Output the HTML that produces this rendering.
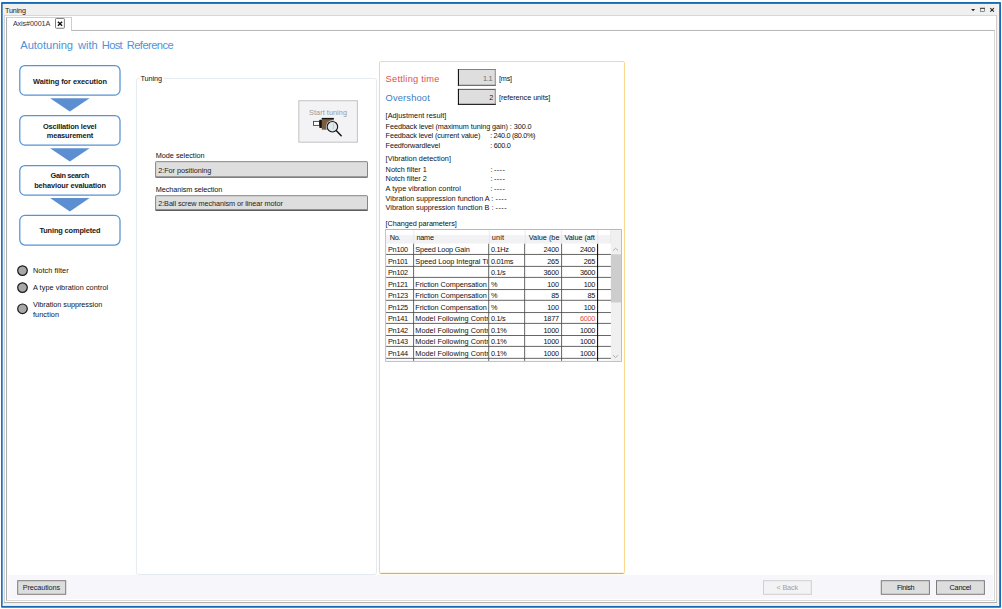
<!DOCTYPE html>
<html lang="en">
<head>
<meta charset="utf-8">
<title>Tuning</title>
<style>
html,body{margin:0;padding:0;}
body{width:1002px;height:609px;position:relative;overflow:hidden;background:#fff;font-family:"Liberation Sans",sans-serif;color:#222;}
#g{position:absolute;left:0;top:0;}
.t{position:absolute;white-space:pre;line-height:12px;height:12px;color:#111;}
</style>
</head>
<body>
<svg id="g" width="1002" height="609" viewBox="0 0 1002 609">
<defs>
<linearGradient id="hd" x1="0" y1="0" x2="0" y2="1"><stop offset="0" stop-color="#ffffff"/><stop offset="0.36" stop-color="#ffffff"/><stop offset="0.40" stop-color="#f3f3f5"/><stop offset="1" stop-color="#f1f1f3"/></linearGradient>
</defs>
<!-- window chrome -->
<rect x="1.05" y="2.1" width="999.95" height="605.7" rx="0.8" fill="#186ab7"/>
<rect x="2.65" y="3.9" width="996.45" height="601.85" fill="#f0f0f0"/>
<rect x="2.65" y="604.5" width="996.45" height="1.25" fill="#f8f4ee"/>
<rect x="997.8" y="3.9" width="1.3" height="601.85" fill="#f8f4ee"/>
<!-- outer frame -->
<rect x="4.1" y="15" width="992.8" height="587.9" fill="#fff"/>
<rect x="4.1" y="15" width="992.8" height="0.85" fill="#d0d0d0"/>
<rect x="4.1" y="15" width="0.9" height="587.9" fill="#d0d0d0"/>
<rect x="996.05" y="15" width="0.85" height="587.9" fill="#c8c8c8"/>
<rect x="4.1" y="602" width="992.8" height="0.9" fill="#a8a8a8"/>
<!-- inner frame (tab content) -->
<rect x="71.1" y="29.95" width="923.8" height="0.85" fill="#aaaaaa"/>
<rect x="6.05" y="17.1" width="1" height="583.65" fill="#ababab"/>
<rect x="994.05" y="29.95" width="0.85" height="570.8" fill="#cfcfcf"/>
<rect x="6.05" y="600" width="988.85" height="0.75" fill="#cdcdcd"/>
<!-- tab -->
<rect x="6.05" y="17.1" width="65.95" height="0.8" fill="#c4c4c4"/>
<rect x="71.1" y="17.1" width="0.9" height="13.7" fill="#c8c8c8"/>
<!-- tab close box -->
<rect x="55.5" y="18.45" width="8.9" height="9.8" rx="0.8" fill="#fff" stroke="#6e6e6e" stroke-width="0.9"/>
<path d="M57.9 21.8 L62.1 25.7 M62.1 21.8 L57.9 25.7" stroke="#111" stroke-width="1.45" fill="none"/>
<!-- title bar icons -->
<g transform="translate(968,4.6)">
<path d="M3.1 4.4 L7.1 4.4 L5.1 6.6 Z" fill="#222"/>
<rect x="12.55" y="3.7" width="4.1" height="3.3" fill="none" stroke="#555a55" stroke-width="0.65"/>
<rect x="12.2" y="3.2" width="4.8" height="0.9" fill="#333"/>
<path d="M22.3 3.5 L25.9 7 M25.9 3.5 L22.3 7" stroke="#222" stroke-width="1.05" fill="none"/>
</g>
<!-- bottom bar -->
<rect x="8.2" y="575" width="985.1" height="23.8" fill="#f7f7fb"/>
<rect x="17.7" y="580.7" width="48" height="13.6" fill="#dddddd" stroke="#7c7c7c" stroke-width="1"/>
<rect x="763.5" y="580.7" width="47.8" height="13.6" fill="#f3f3f5" stroke="#cfcfcf" stroke-width="1"/>
<rect x="881.3" y="580.7" width="48.1" height="13.6" fill="#dddddd" stroke="#7c7c7c" stroke-width="1"/>
<rect x="936.5" y="580.7" width="47.9" height="13.6" fill="#dddddd" stroke="#7c7c7c" stroke-width="1"/>

<!-- steps -->
<g fill="#fff" stroke="#5793d5" stroke-width="1.25">
<rect x="19.8" y="65.5" width="100.2" height="29.6" rx="5.2"/>
<rect x="19.8" y="115.5" width="100.2" height="29.6" rx="5.2"/>
<rect x="19.8" y="165.5" width="100.2" height="29.6" rx="5.2"/>
<rect x="19.8" y="215.4" width="100.2" height="29.6" rx="5.2"/>
</g>
<g fill="#5b8fd2">
<path d="M50.1 98.2 H89.6 L69.85 111.6 Z"/>
<path d="M50.1 148.2 H89.6 L69.85 161.6 Z"/>
<path d="M50.1 198.1 H89.6 L69.85 211.5 Z"/>
</g>
<!-- radios -->
<g fill="#a8a8a8" stroke="#181818" stroke-width="1.2">
<circle cx="22.5" cy="270.6" r="4.8"/>
<circle cx="22.5" cy="287.6" r="4.8"/>
<circle cx="22.5" cy="308.8" r="4.8"/>
</g>

<!-- Tuning group box -->
<path d="M139.5 78.4 H138.5 Q136.4 78.4 136.4 80.6 V572.3 Q136.4 574.5 138.6 574.5 H374.3 Q376.5 574.5 376.5 572.3 V80.6 Q376.5 78.4 374.3 78.4 H164" fill="none" stroke="#e5eaf0" stroke-width="1"/>
<!-- start tuning button -->
<rect x="298.8" y="100.7" width="58.6" height="41.5" fill="#f3f3f5" stroke="#c2c2c2" stroke-width="1"/>
<g>
<rect x="313.5" y="121.4" width="6" height="4" fill="#fff" stroke="#454545" stroke-width="0.9"/>
<rect x="319.3" y="119.8" width="2.7" height="8.1" rx="0.6" fill="#121212"/>
<rect x="321.8" y="118" width="11.95" height="11.7" fill="#7b5c40"/>
<rect x="321.8" y="117.9" width="11.95" height="1.3" fill="#151515"/>
<circle cx="332.4" cy="126.7" r="6.4" fill="#f3f3f5"/>
<circle cx="332.4" cy="126.7" r="5.25" fill="#dfe8ec" stroke="#151515" stroke-width="1.15"/>
<rect x="332.9" y="123.4" width="0.9" height="6" fill="#c4cbd0"/>
<path d="M336.4 130.7 L341.2 135.7" stroke="#151515" stroke-width="1.5" stroke-linecap="round"/>
</g>
<!-- combos -->
<rect x="155.6" y="161.65" width="211.9" height="15.45" rx="0.6" fill="#dedede" stroke="#7e7e7e" stroke-width="0.95"/>
<rect x="155.6" y="195.7" width="211.9" height="14.4" rx="0.6" fill="#dedede" stroke="#7e7e7e" stroke-width="0.95"/>
<rect x="155.4" y="176.7" width="212.3" height="0.9" fill="#5a5a5a"/>
<rect x="155.4" y="209.7" width="212.3" height="0.95" fill="#2e2e2e"/>

<!-- result panel -->
<rect x="379.5" y="61.5" width="245" height="512" rx="1.8" fill="#fff" stroke="#fad88e" stroke-width="1.05"/>
<rect x="380.6" y="572.85" width="242.8" height="1.2" fill="#efae22"/>
<rect x="457.9" y="69.1" width="37.8" height="16.65" fill="#dedede"/>
<rect x="457.9" y="69.1" width="37.8" height="0.9" fill="#767676"/>
<rect x="494.8" y="69.1" width="0.9" height="16.65" fill="#828282"/>
<rect x="457.9" y="84.8" width="37.8" height="0.95" fill="#4c4c4c"/>
<rect x="457.9" y="69.1" width="1.1" height="16.65" fill="#161616"/>
<rect x="457.9" y="88.9" width="37.8" height="16" fill="#dedede"/>
<rect x="457.9" y="88.9" width="37.8" height="0.9" fill="#4a4a4a"/>
<rect x="494.8" y="88.9" width="0.9" height="16" fill="#828282"/>
<rect x="457.9" y="103.8" width="37.8" height="1.1" fill="#161616"/>
<rect x="457.9" y="88.9" width="1.1" height="16" fill="#161616"/>

<!-- table -->
<rect x="385.2" y="229" width="236.7" height="132.85" fill="#a9bbd2"/>
<rect x="386.1" y="230" width="234.85" height="130.9" fill="#fff"/>
<rect x="386.1" y="230" width="224.8" height="13.5" fill="url(#hd)"/>
<rect x="610.9" y="230" width="10.05" height="130.9" fill="#f0f0f0"/>
<g stroke="#e4e6ea" stroke-width="0.8">
<path d="M413.9 230 V243.4 M489.3 230 V243.4 M525.3 230 V243.4 M561.4 230 V243.4 M597.6 230 V243.4 M610.6 230 V243.4"/>
</g>
<!-- scrollbar -->
<rect x="610.9" y="254.3" width="10.05" height="48.2" fill="#cdcdcd"/>
<path d="M613.1 250.7 L615.6 248.3 L618.1 250.7" stroke="#9a9a9a" stroke-width="0.8" fill="none"/>
<path d="M613.1 355.2 L615.6 357.6 L618.1 355.2" stroke="#9a9a9a" stroke-width="0.8" fill="none"/>
<!-- grid lines -->
<g stroke="#4a4a4a" stroke-width="0.85">
<path d="M386.1 254.45 H610.9 M386.1 266.40 H610.9 M386.1 277.40 H610.9 M386.1 289.55 H610.9 M386.1 300.30 H610.9 M386.1 312.55 H610.9 M386.1 323.40 H610.9 M386.1 335.50 H610.9 M386.1 346.40 H610.9 M386.1 358.35 H610.9"/>
<path d="M413.6 243.7 V360.9 M488.7 243.7 V360.9 M524.65 243.7 V360.9 M561.6 243.7 V360.9"/>
</g>
<rect x="597.1" y="243.8" width="1" height="117.1" fill="#000"/>
</svg>

<div class="t" style="top:5px;font-size:7.2px;color:#1a1a1a;letter-spacing:-0.140px;left:4.95px;">Tuning</div>
<div class="t" style="top:18px;font-size:7.2px;color:#333;letter-spacing:-0.112px;left:12.90px;">Axis#0001A</div>
<div class="t" style="top:39px;font-size:11.2px;color:#5093d8;letter-spacing:-0.084px;left:20.30px;">Autotuning</div>
<div class="t" style="top:39px;font-size:11.2px;color:#5093d8;letter-spacing:-0.116px;left:78.10px;">with</div>
<div class="t" style="top:39px;font-size:11.2px;color:#5093d8;letter-spacing:-0.719px;left:101.80px;">Host</div>
<div class="t" style="top:39px;font-size:11.2px;color:#5093d8;letter-spacing:-0.568px;left:126.70px;">Reference</div>
<div class="t" style="top:76px;font-size:7.4px;font-weight:700;color:#1a1a1a;letter-spacing:-0.048px;left:33.10px;">Waiting for execution</div>
<div class="t" style="top:121px;font-size:7.4px;font-weight:700;color:#1a1a1a;letter-spacing:-0.169px;left:43.00px;">Oscillation level</div>
<div class="t" style="top:130px;font-size:7.4px;font-weight:700;color:#1a1a1a;letter-spacing:-0.158px;left:46.80px;">measurement</div>
<div class="t" style="top:170px;font-size:7.4px;font-weight:700;color:#1a1a1a;letter-spacing:-0.344px;left:50.50px;">Gain search</div>
<div class="t" style="top:180px;font-size:7.4px;font-weight:700;color:#1a1a1a;letter-spacing:-0.115px;left:34.20px;">behaviour evaluation</div>
<div class="t" style="top:225px;font-size:7.4px;font-weight:700;color:#1a1a1a;letter-spacing:-0.129px;left:39.40px;">Tuning completed</div>
<div class="t" style="top:265px;font-size:7.3px;letter-spacing:0.072px;left:33.00px;">Notch filter</div>
<div class="t" style="top:282px;font-size:7.3px;letter-spacing:0.058px;left:33.00px;">A type vibration control</div>
<div class="t" style="top:299px;font-size:7.3px;letter-spacing:-0.041px;left:33.00px;">Vibration suppression</div>
<div class="t" style="top:309px;font-size:7.3px;letter-spacing:0.072px;left:33.00px;">function</div>
<div class="t" style="top:73px;font-size:7.3px;letter-spacing:-0.099px;left:140.50px;">Tuning</div>
<div class="t" style="top:107px;font-size:7.3px;color:#9a9a9a;letter-spacing:0.050px;left:309.10px;">Start tuning</div>
<div class="t" style="top:150px;font-size:7.3px;letter-spacing:-0.014px;left:155.70px;">Mode selection</div>
<div class="t" style="top:165px;font-size:7.3px;color:#242424;letter-spacing:-0.046px;left:158.20px;">2:For positioning</div>
<div class="t" style="top:184px;font-size:7.3px;letter-spacing:-0.083px;left:155.70px;">Mechanism selection</div>
<div class="t" style="top:198px;font-size:7.3px;color:#242424;letter-spacing:-0.081px;left:158.20px;">2:Ball screw mechanism or linear motor</div>
<div class="t" style="top:73px;font-size:9.3px;color:#e0504c;letter-spacing:0.228px;left:385.60px;">Settling time</div>
<div class="t" style="top:73px;font-size:7.3px;color:#707070;letter-spacing:-0.350px;right:509.85px;">1.1</div>
<div class="t" style="top:73px;font-size:7.3px;letter-spacing:-0.228px;left:499.00px;">[ms]</div>
<div class="t" style="top:92px;font-size:9.3px;color:#3a7cc4;letter-spacing:0.154px;left:385.60px;">Overshoot</div>
<div class="t" style="top:92px;font-size:7.3px;color:#222;right:508.70px;">2</div>
<div class="t" style="top:92px;font-size:7.3px;letter-spacing:-0.068px;left:499.00px;">[reference units]</div>
<div class="t" style="top:110px;font-size:7.3px;letter-spacing:0.014px;left:385.60px;">[Adjustment result]</div>
<div class="t" style="top:121px;font-size:7.3px;letter-spacing:-0.084px;left:385.60px;">Feedback level (maximum tuning gain) : 300.0</div>
<div class="t" style="top:130px;font-size:7.3px;letter-spacing:-0.114px;left:385.60px;">Feedback level (current value)</div>
<div class="t" style="top:130px;font-size:7.3px;letter-spacing:-0.325px;left:490.20px;">: 240.0 (80.0%)</div>
<div class="t" style="top:140px;font-size:7.3px;letter-spacing:-0.102px;left:385.60px;">Feedforwardlevel</div>
<div class="t" style="top:140px;font-size:7.3px;letter-spacing:-0.281px;left:490.20px;">: 600.0</div>
<div class="t" style="top:153px;font-size:7.3px;letter-spacing:0.050px;left:385.60px;">[Vibration detection]</div>
<div class="t" style="top:164px;font-size:7.3px;letter-spacing:0.025px;left:385.60px;">Notch filter 1</div>
<div class="t" style="top:164px;font-size:7.3px;left:490.40px;">:</div>
<div class="t" style="top:164px;font-size:7.3px;letter-spacing:0.362px;left:494.00px;">----</div>
<div class="t" style="top:173px;font-size:7.3px;letter-spacing:0.025px;left:385.60px;">Notch filter 2</div>
<div class="t" style="top:173px;font-size:7.3px;left:490.40px;">:</div>
<div class="t" style="top:173px;font-size:7.3px;letter-spacing:0.362px;left:494.00px;">----</div>
<div class="t" style="top:183px;font-size:7.3px;letter-spacing:0.063px;left:385.60px;">A type vibration control</div>
<div class="t" style="top:183px;font-size:7.3px;left:490.40px;">:</div>
<div class="t" style="top:183px;font-size:7.3px;letter-spacing:0.362px;left:494.00px;">----</div>
<div class="t" style="top:193px;font-size:7.3px;left:385.60px;">Vibration suppression function A :</div>
<div class="t" style="top:193px;font-size:7.3px;letter-spacing:0.447px;left:495.60px;">----</div>
<div class="t" style="top:202px;font-size:7.3px;letter-spacing:-0.023px;left:385.60px;">Vibration suppression function B :</div>
<div class="t" style="top:202px;font-size:7.3px;letter-spacing:0.447px;left:495.60px;">----</div>
<div class="t" style="top:218px;font-size:7.3px;letter-spacing:-0.077px;left:385.60px;">[Changed parameters]</div>
<div class="t" style="top:232px;font-size:7.3px;letter-spacing:-0.384px;left:389.80px;">No.</div>
<div class="t" style="top:232px;font-size:7.3px;letter-spacing:-0.247px;left:416.50px;">name</div>
<div class="t" style="top:232px;font-size:7.3px;letter-spacing:0.153px;left:491.80px;">unit</div>
<div class="t" style="top:232px;font-size:7.3px;left:528.80px;">Value (be</div>
<div class="t" style="top:232px;font-size:7.3px;letter-spacing:-0.042px;left:564.50px;">Value (aft</div>
<div class="t" style="top:244px;font-size:7.3px;letter-spacing:-0.269px;left:388.00px;">Pn100</div>
<div class="t" style="top:244px;font-size:7.3px;letter-spacing:-0.170px;left:415.30px;width:72.40px;overflow:hidden;">Speed Loop Gain</div>
<div class="t" style="top:244px;font-size:7.3px;letter-spacing:-0.280px;left:490.90px;">0.1Hz</div>
<div class="t" style="top:244px;font-size:7.3px;letter-spacing:-0.250px;right:443.25px;">2400</div>
<div class="t" style="top:244px;font-size:7.3px;letter-spacing:-0.250px;right:406.85px;">2400</div>
<div class="t" style="top:256px;font-size:7.3px;letter-spacing:-0.269px;left:388.00px;">Pn101</div>
<div class="t" style="top:256px;font-size:7.3px;letter-spacing:-0.030px;left:415.30px;width:72.40px;overflow:hidden;">Speed Loop Integral Ti</div>
<div class="t" style="top:256px;font-size:7.3px;letter-spacing:-0.280px;left:490.90px;">0.01ms</div>
<div class="t" style="top:256px;font-size:7.3px;letter-spacing:-0.250px;right:443.25px;">265</div>
<div class="t" style="top:256px;font-size:7.3px;letter-spacing:-0.250px;right:406.85px;">265</div>
<div class="t" style="top:267px;font-size:7.3px;letter-spacing:-0.269px;left:388.00px;">Pn102</div>
<div class="t" style="top:267px;font-size:7.3px;letter-spacing:-0.280px;left:490.90px;">0.1/s</div>
<div class="t" style="top:267px;font-size:7.3px;letter-spacing:-0.250px;right:443.25px;">3600</div>
<div class="t" style="top:267px;font-size:7.3px;letter-spacing:-0.250px;right:406.85px;">3600</div>
<div class="t" style="top:279px;font-size:7.3px;letter-spacing:-0.269px;left:388.00px;">Pn121</div>
<div class="t" style="top:279px;font-size:7.3px;letter-spacing:-0.080px;left:415.30px;width:72.40px;overflow:hidden;">Friction Compensation</div>
<div class="t" style="top:279px;font-size:7.3px;letter-spacing:-0.280px;left:490.90px;">%</div>
<div class="t" style="top:279px;font-size:7.3px;letter-spacing:-0.250px;right:443.25px;">100</div>
<div class="t" style="top:279px;font-size:7.3px;letter-spacing:-0.250px;right:406.85px;">100</div>
<div class="t" style="top:290px;font-size:7.3px;letter-spacing:-0.269px;left:388.00px;">Pn123</div>
<div class="t" style="top:290px;font-size:7.3px;letter-spacing:-0.080px;left:415.30px;width:72.40px;overflow:hidden;">Friction Compensation</div>
<div class="t" style="top:290px;font-size:7.3px;letter-spacing:-0.280px;left:490.90px;">%</div>
<div class="t" style="top:290px;font-size:7.3px;letter-spacing:-0.250px;right:443.25px;">85</div>
<div class="t" style="top:290px;font-size:7.3px;letter-spacing:-0.250px;right:406.85px;">85</div>
<div class="t" style="top:302px;font-size:7.3px;letter-spacing:-0.269px;left:388.00px;">Pn125</div>
<div class="t" style="top:302px;font-size:7.3px;letter-spacing:-0.080px;left:415.30px;width:72.40px;overflow:hidden;">Friction Compensation</div>
<div class="t" style="top:302px;font-size:7.3px;letter-spacing:-0.280px;left:490.90px;">%</div>
<div class="t" style="top:302px;font-size:7.3px;letter-spacing:-0.250px;right:443.25px;">100</div>
<div class="t" style="top:302px;font-size:7.3px;letter-spacing:-0.250px;right:406.85px;">100</div>
<div class="t" style="top:313px;font-size:7.3px;letter-spacing:-0.269px;left:388.00px;">Pn141</div>
<div class="t" style="top:313px;font-size:7.3px;letter-spacing:0.040px;left:415.30px;width:72.40px;overflow:hidden;">Model Following Contr</div>
<div class="t" style="top:313px;font-size:7.3px;letter-spacing:-0.280px;left:490.90px;">0.1/s</div>
<div class="t" style="top:313px;font-size:7.3px;letter-spacing:-0.250px;right:443.25px;">1877</div>
<div class="t" style="top:313px;font-size:7.3px;color:#e0504c;letter-spacing:-0.250px;right:406.85px;">6000</div>
<div class="t" style="top:325px;font-size:7.3px;letter-spacing:-0.269px;left:388.00px;">Pn142</div>
<div class="t" style="top:325px;font-size:7.3px;letter-spacing:0.040px;left:415.30px;width:72.40px;overflow:hidden;">Model Following Contr</div>
<div class="t" style="top:325px;font-size:7.3px;letter-spacing:-0.280px;left:490.90px;">0.1%</div>
<div class="t" style="top:325px;font-size:7.3px;letter-spacing:-0.250px;right:443.25px;">1000</div>
<div class="t" style="top:325px;font-size:7.3px;letter-spacing:-0.250px;right:406.85px;">1000</div>
<div class="t" style="top:336px;font-size:7.3px;letter-spacing:-0.269px;left:388.00px;">Pn143</div>
<div class="t" style="top:336px;font-size:7.3px;letter-spacing:0.040px;left:415.30px;width:72.40px;overflow:hidden;">Model Following Contr</div>
<div class="t" style="top:336px;font-size:7.3px;letter-spacing:-0.280px;left:490.90px;">0.1%</div>
<div class="t" style="top:336px;font-size:7.3px;letter-spacing:-0.250px;right:443.25px;">1000</div>
<div class="t" style="top:336px;font-size:7.3px;letter-spacing:-0.250px;right:406.85px;">1000</div>
<div class="t" style="top:348px;font-size:7.3px;letter-spacing:-0.269px;left:388.00px;">Pn144</div>
<div class="t" style="top:348px;font-size:7.3px;letter-spacing:0.040px;left:415.30px;width:72.40px;overflow:hidden;">Model Following Contr</div>
<div class="t" style="top:348px;font-size:7.3px;letter-spacing:-0.280px;left:490.90px;">0.1%</div>
<div class="t" style="top:348px;font-size:7.3px;letter-spacing:-0.250px;right:443.25px;">1000</div>
<div class="t" style="top:348px;font-size:7.3px;letter-spacing:-0.250px;right:406.85px;">1000</div>
<div class="t" style="top:582px;font-size:7.3px;color:#1c1c1c;letter-spacing:-0.128px;left:22.80px;">Precautions</div>
<div class="t" style="top:582px;font-size:7.3px;color:#a0a0a0;letter-spacing:-0.185px;left:776.50px;">&lt; Back</div>
<div class="t" style="top:582px;font-size:7.3px;letter-spacing:-0.358px;left:897.00px;">Finish</div>
<div class="t" style="top:582px;font-size:7.3px;letter-spacing:-0.222px;left:949.50px;">Cancel</div>
</body>
</html>
